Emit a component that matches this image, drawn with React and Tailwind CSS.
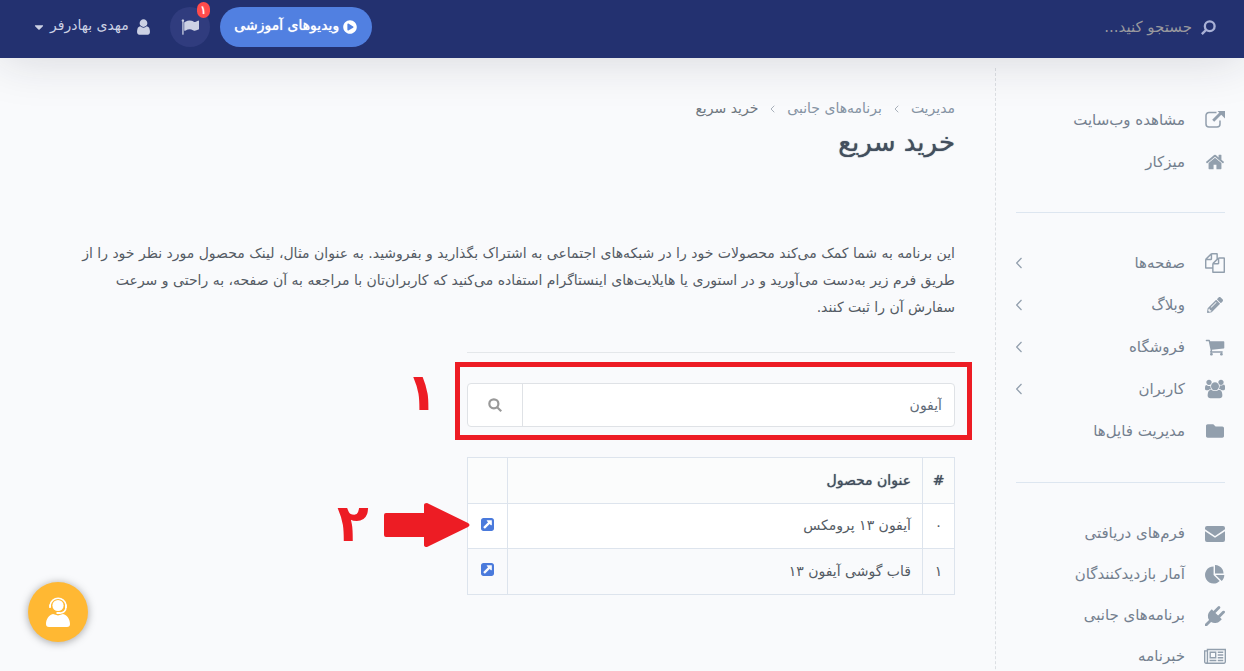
import React from "react";
import { FaPencilAlt, FaFolder, FaCaretDown, FaPlayCircle } from "react-icons/fa";

const shapes = {
  files: ["0 0 1792 1792", "M1696 384q40 0 68 28t28 68v1216q0 40-28 68t-68 28h-960q-40 0-68-28t-28-68v-288h-544q-40 0-68-28t-28-68v-672q0-40 20-88t48-76l408-408q28-28 76-48t88-20h416q40 0 68 28t28 68v328q68-40 128-40h416zm-544 213l-299 299h299v-299zm-640-384l-299 299h299v-299zm196 647l316-316v-416h-384v416q0 40-28 68t-68 28h-416v640h512v-256q0-40 20-88t48-76zm956 804v-1152h-384v416q0 40-28 68t-68 28h-416v640h896z"],
  users: ["0 0 1920 1792", "M593 896q-162 5-265 128h-134q-82 0-138-40.5t-56-118.5q0-353 124-353 6 0 43.5 21t97.5 42.5 119 21.5q67 0 133-23-5 37-5 66 0 159 93 293zm1071 637q0 120-73 189.5t-194 69.5h-874q-121 0-194-69.5t-73-189.5q0-53 3.5-103.5t14-109 26.5-108.5 43-97.5 62-81 85.5-53.5 111.5-20q10 0 43 21.5t73 48 107 48 135 21.5 135-21.5 107-48 73-48 43-21.5q61 0 111.5 20t85.5 53.5 62 81 43 97.5 26.5 108.5 14 109 3.5 103.5zm-1024-1277q0 106-75 181t-181 75-181-75-75-181 75-181 181-75 181 75 75 181zm704 384q0 159-112.5 271.5t-271.5 112.5-271.5-112.5-112.5-271.5 112.5-271.5 271.5-112.5 271.5 112.5 112.5 271.5zm576 225q0 78-56 118.5t-138 40.5h-134q-103-123-265-128 93-134 93-293 0-29-5-66 66 23 133 23 59 0 119-21.5t97.5-42.5 43.5-21q124 0 124 353zm-128-609q0 106-75 181t-181 75-181-75-75-181 75-181 181-75 181 75 75 181z"],
  home: ["0 0 1792 1792", "M1472 992v480q0 26-19 45t-45 19h-384v-384h-256v384h-384q-26 0-45-19t-19-45v-480q0-1 .5-3t.5-3l575-474 575 474q1 2 1 6zm223-69l-62 74q-8 9-21 11h-3q-13 0-21-7l-692-577-692 577q-12 8-24 7-13-2-21-11l-62-74q-8-10-7-23.5t11-21.5l719-599q32-26 76-26t76 26l244 204v-195q0-14 9-23t23-9h192q14 0 23 9t9 23v408l219 182q10 8 11 21.5t-7 23.5z"],
  envelope: ["0 0 20 16", "M2 0h16q2 0 2 2v1.2L10 10 0 3.200V2Q0 0 2 0zM0 5.200l10 6.600 10-6.600V14q0 2-2 2H2q-2 0-2-2z"],
  newspaper: ["0 0 2048 1792", "M1024 512h-384v384h384v-384zm128 640v128h-640v-128h640zm0-768v640h-640v-640h640zm640 768v128h-512v-128h512zm0-256v128h-512v-128h512zm0-256v128h-512v-128h512zm0-256v128h-512v-128h512zm-1536 960v-960h-128v960q0 26 19 45t45 19 45-19 19-45zm1664 0v-1088h-1536v1088q0 33-11 64h1483q26 0 45-19t19-45zm128-1216v1216q0 80-56 136t-136 56h-1664q-80 0-136-56t-56-136v-1088h256v-128h1792z"],
  pie: ["0 0 1792 1792", "M768 890l546 546q-106 108-247.5 168t-298.5 60q-209 0-385.5-103t-279.5-279.5-103-385.5 103-385.5 279.5-279.5 385.5-103v762zm187 6h773q0 157-60 298.5t-168 247.5zm709-128h-768v-768q209 0 385.5 103t279.5 279.5 103 385.5z"],
  plug: ["0 0 1792 1792", "M1755 453q37 38 37 90.5t-37 90.5l-401 400 150 150-160 160q-163 163-389.5 186.5t-411.5-100.5l-362 362h-181v-181l362-362q-124-185-100.5-411.5t186.5-389.5l160-160 150 150 400-401q38-37 91-37t90 37 37 90.5-37 90.5l-400 401 234 234 401-400q38-37 91-37t90 37z"],
  cart: ["0 0 1792 1792", "M704 1536q0 52-38 90t-90 38-90-38-38-90 38-90 90-38 90 38 38 90zm896 0q0 52-38 90t-90 38-90-38-38-90 38-90 90-38 90 38 38 90zm128-1088v512q0 24-16.5 42.5t-40.5 21.5l-1044 122q13 60 13 70 0 16-24 64h920q26 0 45 19t19 45-19 45-45 19h-1024q-26 0-45-19t-19-45q0-11 8-31.5t16-36 21.5-40 15.5-29.5l-177-823h-204q-26 0-45-19t-19-45 19-45 45-19h256q16 0 28.5 6.5t19.5 15.5 13 24.5 8 26 5.5 29.5 4.5 26h1201q26 0 45 19t19 45z"],
  openSquare: ["128 128 1536 1536", "M1408 928v-480q0-26-19-45t-45-19h-480q-42 0-59 39-17 41 14 70l144 144-534 534q-19 19-19 45t19 45l102 102q19 19 45 19t45-19l534-534 144 144q18 19 45 19 12 0 25-5 39-17 39-59zm256-512v960q0 119-84.5 203.5t-203.5 84.5h-960q-119 0-203.5-84.5t-84.5-203.5v-960q0-119 84.5-203.5t203.5-84.5h960q119 0 203.5 84.5t84.5 203.5z"],
  flag: ["0 0 1792 1792", "M320 256q0 72-64 110v1266q0 13-9.5 22.5t-22.5 9.5h-64q-13 0-22.5-9.5t-9.5-22.5v-1266q-64-38-64-110 0-53 37.5-90.5t90.5-37.5 90.5 37.5 37.5 90.5zm1472 64v763q0 25-12.5 38.5t-39.5 27.5q-215 116-369 116-61 0-123.5-22t-108.5-48-115.5-48-142.5-22q-192 0-464 146-17 9-33 9-26 0-45-19t-19-45v-742q0-32 31-55 21-14 79-43 236-120 421-120 107 0 200 29t219 88q38 19 88 19 54 0 117.5-21t110-47 88-47 54.5-21q26 0 45 19t19 45z"],
  user: ["256 0 1280 1792", "M1536 1399q0 109-62.5 187t-150.5 78h-854q-88 0-150.500-78t-62.500-187q0-85 8.500-160.500t31.500-152 58.500-131 94-89 134.500-34.500q131 128 313 128t313-128q76 0 134.500 34.500t94 89 58.500 131 31.500 152 8.500 160.500zm-256-887q0 159-112.500 271.500t-271.500 112.500-271.500-112.500-112.500-271.500 112.500-271.500 271.500-112.500 271.500 112.500 112.500 271.500z"],
};

function Shape({ name, className = "size-5" }) {
  const [box, d] = shapes[name];
  return (
    <svg viewBox={box} className={className} fill="currentColor" aria-hidden="true">
      <path d={d} />
    </svg>
  );
}

function ExternalLink() {
  return (
    <svg viewBox="0 0 20 20" className="size-5" fill="none" aria-hidden="true">
      <path d="M11.500 2.500H4a3 3 0 0 0-3 3V14a3 3 0 0 0 3 3h8a3 3 0 0 0 3-3v-3.500" stroke="currentColor" strokeWidth="1.500" />
      <path d="M8.200 10.800 17 2" stroke="currentColor" strokeWidth="2.900" />
      <path d="M12.500 1H20v7.500z" fill="currentColor" />
    </svg>
  );
}

function Magnifier({ className }) {
  return (
    <svg viewBox="0 0 16 16" className={className} fill="none" stroke="currentColor" strokeWidth="2.500" aria-hidden="true">
      <circle cx="6.700" cy="6.700" r="5.200" />
      <path d="m10.500 10.500 4.600 4.600" />
    </svg>
  );
}

const groups = [
  {
    row: "h-[42px]",
    list: "",
    items: [
      { label: "مشاهده وب‌سایت", icon: <ExternalLink /> },
      { label: "میزکار", icon: <Shape name="home" /> },
    ],
  },
  {
    row: "h-[42px]",
    list: "mt-[29px] border-t pt-[29px]",
    items: [
      { label: "صفحه‌ها", icon: <Shape name="files" />, more: true },
      { label: "وبلاگ", icon: <FaPencilAlt className="size-4" />, more: true },
      { label: "فروشگاه", icon: <Shape name="cart" />, more: true },
      { label: "کاربران", icon: <Shape name="users" />, more: true },
      { label: "مدیریت فایل‌ها", icon: <FaFolder className="size-[18px]" /> },
    ],
  },
  {
    row: "h-[41px]",
    list: "mt-[30px] border-t pt-[30px]",
    items: [
      { label: "فرم‌های دریافتی", icon: <Shape name="envelope" className="h-4 w-5" /> },
      { label: "آمار بازدیدکنندگان", icon: <Shape name="pie" /> },
      { label: "برنامه‌های جانبی", icon: <Shape name="plug" /> },
      { label: "خبرنامه", icon: <Shape name="newspaper" className="h-5 w-[22px] shrink-0" /> },
    ],
  },
];

const products = [
  { id: "۰", title: "آیفون ۱۳ پرومکس" },
  { id: "۱", title: "قاب گوشی آیفون ۱۳" },
];

function Header() {
  return (
    <header className="relative z-10 flex h-[58px] items-center justify-between bg-[#233170] pr-7 pb-1 pl-8 shadow-[0_0_50px_0_rgba(30,30,50,0.17)]">
      <label className="flex items-center gap-[9px]">
        <Magnifier className="size-[15px] -scale-x-100 text-[#a9b1d6]" />
        <input
          type="search"
          aria-label="جستجو"
          placeholder="جستجو کنید..."
          className="w-40 bg-transparent text-[15px] text-white outline-none placeholder:text-[#99999e]"
        />
      </label>
      <div className="flex items-center">
        <a href="#videos" className="flex h-10 w-[152px] items-center justify-center gap-1 rounded-full bg-[#5180e1] text-sm text-white [text-shadow:0_0_1px_currentColor]">
          <FaPlayCircle className="size-[14px] shrink-0" />
          <span className="pb-1 whitespace-nowrap">ویدیوهای آموزشی</span>
        </a>
        <button aria-label="اعلان‌ها" className="relative mr-[10px] flex size-10 items-center justify-center rounded-full bg-[#303c7e] text-[#ccd1e4]">
          <Shape name="flag" className="size-[18px]" />
          <span className="absolute -top-[5px] right-0 flex h-4 w-[13px] items-center justify-center rounded-full bg-[#ff4b4b] text-xs leading-none text-white [text-shadow:0_0_1px_currentColor]">۱</span>
        </button>
        <button className="mr-5 flex items-center text-sm text-[#ccd1e4]">
          <Shape name="user" className="h-[18px] w-[13px]" />
          <span className="mr-2 mb-1 ml-1 whitespace-nowrap">مهدی بهادرفر</span>
          <FaCaretDown className="size-[14px]" />
        </button>
      </div>
    </header>
  );
}

function Sidebar() {
  return (
    <aside className="mt-[10px] w-[249px] shrink-0 border-l border-dashed border-[#dcdfe3] pt-[31px] pr-[19px] pl-5">
      <nav>
        {groups.map((group, i) => (
          <ul key={i} className={`border-[#dde6f0] ${group.list}`}>
            {group.items.map((item) => (
              <li key={item.label}>
                <a href="#menu" className={`flex items-center gap-5 text-[15px] text-[#74808f] ${group.row}`}>
                  <span className="flex w-5 shrink-0 items-center justify-center text-[#929fad]">{item.icon}</span>
                  <span className="grow whitespace-nowrap">{item.label}</span>
                  {item.more && (
                    <svg viewBox="0 0 8 12" className="h-3 w-2" fill="none" stroke="#929fad" strokeWidth="1.200" aria-hidden="true">
                      <path d="M5.500 1 .7 6l4.800 5" />
                    </svg>
                  )}
                </a>
              </li>
            ))}
          </ul>
        ))}
      </nav>
    </aside>
  );
}

function Separator() {
  return (
    <svg viewBox="0 0 5 8" className="mt-[2px] h-2 w-[5px]" fill="none" stroke="#a9b1bb" aria-hidden="true">
      <path d="M4.300.7 1 4l3.300 3.300" />
    </svg>
  );
}

function Main() {
  return (
    <main className="min-w-0 grow pt-[38px] pr-10 pl-10">
      <nav className="flex h-6 items-center gap-3 text-sm text-[#8593a3]">
        <a href="#admin">مدیریت</a>
        <Separator />
        <a href="#apps">برنامه‌های جانبی</a>
        <Separator />
        <span className="text-[#6f7780]">خرید سریع</span>
      </nav>
      <h1 className="mt-1 text-[26px] leading-9 text-[#434f5e] [text-shadow:0_0_1px_currentColor]">خرید سریع</h1>
      <p className="mt-[80px] text-sm leading-[27px] whitespace-nowrap text-[#545b64]">
        این برنامه به شما کمک می‌کند محصولات خود را در شبکه‌های اجتماعی به اشتراک بگذارید و بفروشید. به عنوان مثال، لینک محصول مورد نظر خود را از
        <br />
        طریق فرم زیر به‌دست می‌آورید و در استوری یا هایلایت‌های اینستاگرام استفاده می‌کنید که کاربران‌تان با مراجعه به آن صفحه، به راحتی و سرعت
        <br />
        سفارش آن را ثبت کنند.
      </p>
      <section className="mt-[31px] w-[488px] border-t border-[#e4e7ea] pt-[30px]">
        <form className="relative flex h-11 rounded border border-[#dfe2e6] bg-white" onSubmit={(e) => e.preventDefault()}>
          <input aria-label="جستجوی محصول" defaultValue="آیفون" className="min-w-0 grow bg-transparent px-3 text-sm text-[#606b78] outline-none" />
          <button aria-label="جستجو" className="flex w-[55px] items-center justify-center border-r border-[#dfe2e6] text-[#999]">
            <Magnifier className="size-[14px]" />
          </button>
          <div className="pointer-events-none absolute -top-[22px] -right-[18px] -bottom-[14px] -left-[13px] border-5 border-[#ed1c24]" />
          <span className="pointer-events-none absolute -top-[18px] -left-[62px] text-[52px] leading-[52px] font-bold text-[#ed1c24]">۱</span>
        </form>
        <div className="relative mt-[30px]">
          <table className="w-full border-collapse text-sm text-[#545b64]">
            <thead>
              <tr className="h-[46px] bg-[#fbfcfc] text-[#434f5e] [text-shadow:0_0_1px_currentColor]">
                <th className="w-8 border border-[#dde4ed] pb-[2px] font-medium">#</th>
                <th className="border border-[#dde4ed] px-[11px] pb-[2px] text-right font-medium">عنوان محصول</th>
                <th className="w-10 border border-[#dde4ed]" aria-label="پیوند" />
              </tr>
            </thead>
            <tbody>
              {products.map((p) => (
                <tr key={p.id} className="h-[45px] odd:bg-white last:h-[46px]">
                  <td className="border border-[#dde4ed] pb-[2px] text-center">{p.id}</td>
                  <td className="border border-[#dde4ed] px-[11px] pb-[2px]">{p.title}</td>
                  <td className="border border-[#dde4ed]">
                    <a href="#product" aria-label={p.title} className="flex justify-center pb-1 text-[#4a7adc]">
                      <Shape name="openSquare" className="size-[13px]" />
                    </a>
                  </td>
                </tr>
              ))}
            </tbody>
          </table>
          <svg viewBox="0 0 86 44" className="pointer-events-none absolute top-[46px] -left-[83px] h-11 w-[86px]" fill="#ed1c24" aria-hidden="true">
            <path d="M2 10h38V2q0-2 3-2l41 20q3 2 0 4L43 44q-3 0-3-2v-8H2q-2 0-2-2V12q0-2 2-2z" />
          </svg>
          <span className="pointer-events-none absolute top-[40px] -left-[130px] text-[52px] leading-[52px] font-bold text-[#ed1c24]">۲</span>
        </div>
      </section>
    </main>
  );
}

export default function App() {
  return (
    <div dir="rtl" className="h-screen overflow-hidden bg-[#f9fafc] font-['DejaVu_Sans',sans-serif]">
      <Header />
      <div className="flex h-full">
        <Sidebar />
        <Main />
      </div>
      <button aria-label="پشتیبانی" className="fixed bottom-[29px] left-7 flex size-[60px] items-center justify-center rounded-full bg-[#ffb833] text-white shadow-[0_1px_8px_rgba(0,0,0,0.35)]">
        <svg viewBox="0 0 26 32" className="h-8 w-[26px]" fill="none" aria-hidden="true">
          <circle cx="13" cy="9.500" r="5.600" fill="currentColor" />
          <path d="M5.200 11V9a8 8 0 0 1 15.800 0v2c0 3-2 5.600-6 6.200" stroke="currentColor" strokeWidth="1.500" />
          <path d="M4.200 8.500h1.600v3.500H4.200zM20 8.500h1.800v3.500H20zM11.500 16h4v2h-4z" fill="currentColor" />
          <path d="M1 28c0-5 3-9 7-10l5 1.500 5-1.500c4 1 7 5 7 10 0 2-1 3-3 3H4c-2 0-3-1-3-3z" fill="currentColor" />
        </svg>
      </button>
    </div>
  );
}
